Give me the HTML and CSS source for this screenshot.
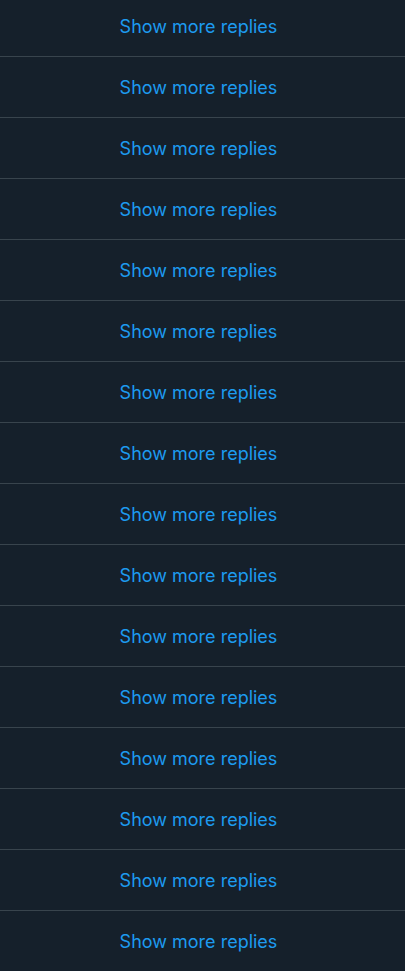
FILE: index.html
```html
<!DOCTYPE html>
<html>
<head>
<meta charset="utf-8">
<link rel="stylesheet" href="styles.css">
</head>
<body>
<div class="list">
  <div class="row"><span class="link">Show more replies</span></div>
  <div class="row"><span class="link">Show more replies</span></div>
  <div class="row"><span class="link">Show more replies</span></div>
  <div class="row"><span class="link">Show more replies</span></div>
  <div class="row"><span class="link">Show more replies</span></div>
  <div class="row"><span class="link">Show more replies</span></div>
  <div class="row"><span class="link">Show more replies</span></div>
  <div class="row"><span class="link">Show more replies</span></div>
  <div class="row"><span class="link">Show more replies</span></div>
  <div class="row"><span class="link">Show more replies</span></div>
  <div class="row"><span class="link">Show more replies</span></div>
  <div class="row"><span class="link">Show more replies</span></div>
  <div class="row"><span class="link">Show more replies</span></div>
  <div class="row"><span class="link">Show more replies</span></div>
  <div class="row"><span class="link">Show more replies</span></div>
  <div class="row"><span class="link">Show more replies</span></div>
</div>
</body>
</html>
```
FILE: styles.css
```css
html, body {
  margin: 0;
  padding: 0;
  background: #15202b;
  overflow: hidden;
}
.list {
  margin-top: -4px;
  display: flex;
  flex-direction: column;
}
.row {
  height: 60px;
  border-bottom: 1px solid #38444d;
  display: flex;
  align-items: center;
  justify-content: center;
  padding-right: 8px;
}
.link {
  font-family: Inter, "Noto Sans", sans-serif;
  font-size: 18px;
  color: #1d9bf0;
}
```
